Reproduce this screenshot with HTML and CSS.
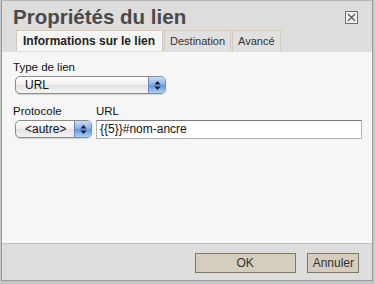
FILE: index.html
```html
<!DOCTYPE html>
<html lang="fr">
<head>
  <meta charset="UTF-8">
  <title>Propriétés du lien</title>
  <link rel="stylesheet" href="styles.css">
</head>
<body>

  <div class="dialog">
    <!-- Title bar -->
    <div class="titlebar">
      <h1>Propriétés du lien</h1>
      <span class="close">
        <svg width="13" height="13" viewBox="0 0 13 13">
          <rect x="0.5" y="0.5" width="12" height="12" fill="#f2f2f2" stroke="#6e6e6e"/>
          <path d="M3 3 L10 10 M10 3 L3 10" stroke="#5a5a5a" stroke-width="1.4"/>
        </svg>
      </span>
    </div>

    <!-- Tabs -->
    <div class="tabs">
      <div class="tab active">Informations sur le lien</div>
      <div class="tab">Destination</div>
      <div class="tab">Avancé</div>
    </div>

    <!-- Panel -->
    <div class="panel">
      <label class="lbl">Type de lien</label>
      <div class="select wide">
        <span class="value">URL</span>
        <span class="arrows">
          <svg width="7" height="9" viewBox="0 0 7 9"><path d="M3.5 0 L6.5 3.5 H0.5 Z M3.5 9 L6.5 5.5 H0.5 Z" fill="#1a1a2a"/></svg>
        </span>
      </div>

      <div class="row">
        <div class="field">
          <label class="lbl">Protocole</label>
          <div class="select narrow">
            <span class="value">&lt;autre&gt;</span>
            <span class="arrows">
              <svg width="7" height="9" viewBox="0 0 7 9"><path d="M3.5 0 L6.5 3.5 H0.5 Z M3.5 9 L6.5 5.5 H0.5 Z" fill="#1a1a2a"/></svg>
            </span>
          </div>
        </div>
        <div class="field grow">
          <label class="lbl">URL</label>
          <div class="input">{{5}}#nom-ancre</div>
        </div>
      </div>
    </div>

    <!-- Footer -->
    <div class="footer">
      <button class="btn ok">OK</button>
      <button class="btn cancel">Annuler</button>
    </div>
  </div>

</body>
</html>
```

FILE: styles.css
```css
body {
  margin: 0;
  background: #c6c6c6;
  font-family: 'Liberation Sans', Arial, sans-serif;
  width: 375px;
  height: 284px;
  overflow: hidden;
}

.dialog {
  margin-left: 1px;
  width: 370px;
  height: 279px;
  border: 1px solid #9c9c9c;
  border-top-color: #b4b4b4;
  background: #dddddd;
  display: flex;
  flex-direction: column;
}

.titlebar {
  display: flex;
  justify-content: space-between;
  align-items: center;
  padding: 3px 14px 0 11px;
  height: 26px;
}

h1 {
  margin: 0;
  font-size: 20.5px;
  font-weight: bold;
  color: #4a4a4a;
}

.close {
  display: flex;
  margin-top: 1px;
}

.tabs {
  display: flex;
  padding-left: 14px;
  height: 21px;
}

.tab {
  padding: 0 5px;
  font-size: 11px;
  line-height: 20px;
  color: #333;
  background: #e0e0e0;
  border: 1px solid #d2cbbd;
  border-bottom: none;
  margin-right: 1px;
}

.tab.active {
  background: #f6f6f6;
  font-weight: bold;
  font-size: 12px;
  color: #222;
  padding: 0 7px 0 6px;
  height: 21px;
}

.panel {
  flex: 1;
  background: #f6f6f6;
  border-top: 1px solid #e4e0d8;
  border-bottom: 1px solid #c8c0b2;
  padding: 9px 10px 0 11px;
}

.lbl {
  display: block;
  font-size: 11.5px;
  color: #111;
  margin-bottom: 3px;
}

.select {
  display: flex;
  height: 16px;
  margin-left: 2px;
  border: 1px solid #8c8c8c;
  border-radius: 5px;
  background: linear-gradient(#ffffff, #f0f0f0 50%, #e2e2e2 51%, #f4f4f4);
  overflow: hidden;
  box-shadow: 0 1px 1px rgba(0, 0, 0, 0.15);
}

.select .value {
  flex: 1;
  font-size: 12px;
  line-height: 16px;
  padding-left: 9px;
  color: #111;
}

.select .arrows {
  width: 16px;
  display: flex;
  align-items: center;
  justify-content: center;
  border-left: 1px solid #6c86b8;
  background: linear-gradient(#c6dcf8, #84b0ea 50%, #5c94e0 51%, #a8d0fa);
}

.select.wide {
  width: 149px;
}

.row {
  display: flex;
  gap: 4px;
  margin-top: 11px;
}

.select.narrow {
  width: 75px;
}

.field.grow {
  flex: 1;
}

.input {
  height: 17px;
  border: 1px solid #b4b4b4;
  border-top-color: #7a7a7a;
  background: #fff;
  font-size: 12px;
  line-height: 17px;
  padding-left: 3px;
  color: #111;
}

.footer {
  height: 36px;
  display: flex;
  justify-content: flex-end;
  align-items: center;
  gap: 11px;
  padding: 2px 13px 0 0;
  box-sizing: border-box;
}

.btn {
  height: 20px;
  padding: 0 3px;
  font-family: 'Liberation Sans', Arial, sans-serif;
  font-size: 12px;
  color: #333;
  background: #d5cdbd;
  border: 1px solid #7e786a;
  border-radius: 0;
}

.btn.ok {
  width: 101px;
}

.btn.cancel {
  padding: 0 4px 0 5px;
}
```
